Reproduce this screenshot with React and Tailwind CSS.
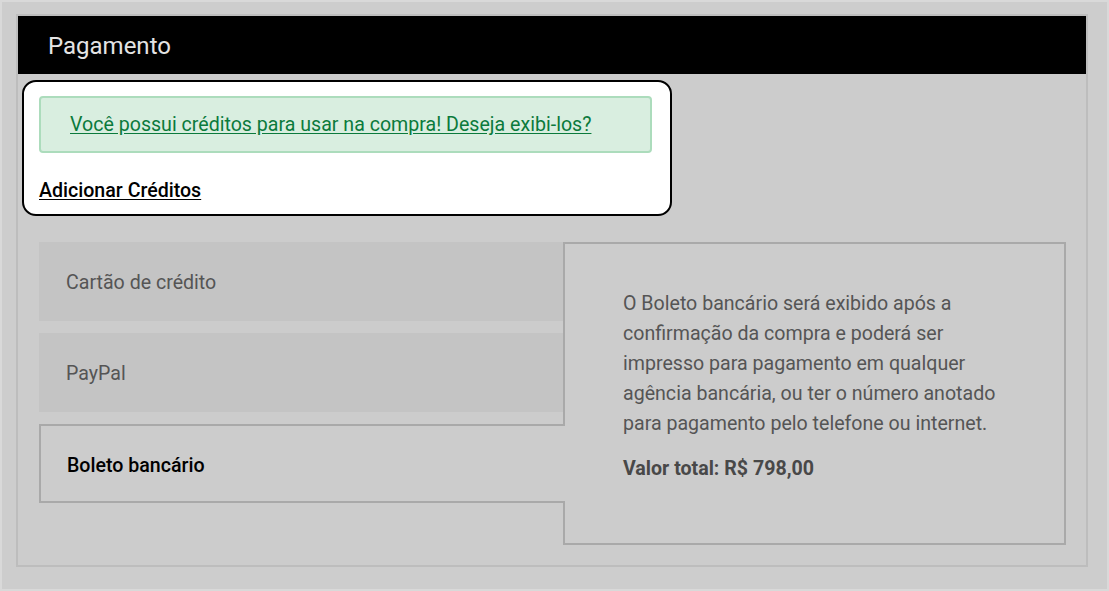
const TABS = [
  { id: 'card', label: 'Cartão de crédito' },
  { id: 'paypal', label: 'PayPal' },
  { id: 'boleto', label: 'Boleto bancário' },
]

function Tab({ label, active }) {
  if (active) {
    return (
      <div className="relative z-10 -mr-[2px] h-[79px] flex items-center pl-[26px] pt-[4px] bg-[#cccccc] border-2 border-r-0 border-[#a9a9a9] text-[19.6px] font-medium text-black">
        {label}
      </div>
    )
  }
  return (
    <div className="h-[79px] flex items-center pl-[27px] pt-[3px] bg-[#c4c4c4] text-[19.6px] text-[#555555]">
      {label}
    </div>
  )
}

export default function App() {
  const active = 'boleto'

  return (
    <div
      className="w-[1109px] h-[591px] border-2 border-[#d9d9d9] bg-[#cdcdcd] pl-[14px] pt-[12px]"
      style={{ fontFamily: 'Roboto, "Liberation Sans", sans-serif' }}
    >
      <div className="w-[1072px] h-[553px] border-2 border-[#bdbdbd] bg-[#cccccc] flex flex-col">
        {/* Cabeçalho */}
        <header className="h-[58px] bg-black flex items-center pl-[30px] pt-[2px] shrink-0">
          <h1 className="text-[24px] text-[#e4e4e4] leading-none">Pagamento</h1>
        </header>

        {/* Créditos */}
        <div className="ml-[4px] mt-[6px] w-[650px] h-[136px] bg-white border-2 border-black rounded-[14px] pl-[15px] pr-[18px] pt-[14px]">
          <div className="h-[57px] bg-[#d9eee0] border-2 border-[#acdcbc] rounded-[4px] flex items-center pl-[29px]">
            <a href="#" className="text-[19.6px] text-[#0b7a3c] underline underline-offset-2">
              Você possui créditos para usar na compra! Deseja exibi-los?
            </a>
          </div>
          <a href="#" className="inline-block mt-[28px] text-[19.6px] font-medium text-black underline underline-offset-2 leading-none">
            Adicionar Créditos
          </a>
        </div>

        {/* Formas de pagamento */}
        <div className="flex mt-[26px] ml-[21px] mr-[20px]">
          <div className="w-[524px] flex flex-col gap-[12px]">
            {TABS.map((t) => (
              <Tab key={t.id} label={t.label} active={t.id === active} />
            ))}
          </div>
          <div className="flex-1 h-[303px] border-2 border-[#a9a9a9] pl-[58px] pt-[45px]">
            <p className="w-[392px] text-[19.6px] leading-[30px] text-[#555555]">
              O Boleto bancário será exibido após a confirmação da compra e poderá ser impresso para pagamento em qualquer agência bancária, ou ter o número anotado para pagamento pelo telefone ou internet.
            </p>
            <p className="mt-[15px] text-[19.6px] leading-[30px] font-bold text-[#484848]">
              Valor total: R$ 798,00
            </p>
          </div>
        </div>
      </div>
    </div>
  )
}
